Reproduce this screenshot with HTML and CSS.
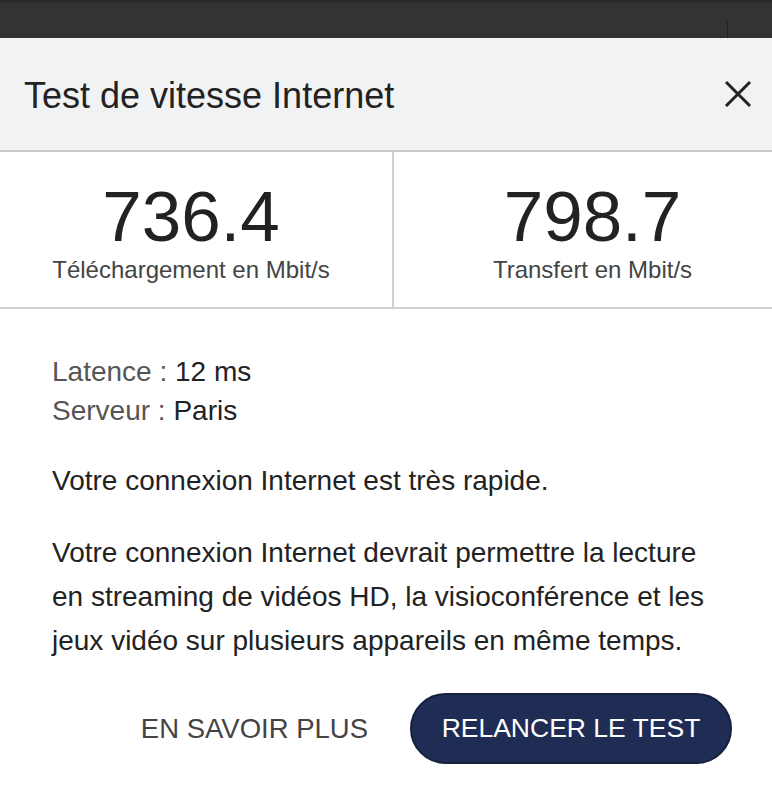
FILE: index.html
```html
<html>
  <head>
    <title>Test de vitesse Internet</title>
    <meta name="viewport" content="width=device-width, initial-scale=1.0">
    <link rel="stylesheet" href="styles.css">
  </head>
  <body>
    <div class="topbar"><span class="topbar-tick"></span></div>
    <div class="dialog">
      <div class="header">
        <h1>Test de vitesse Internet</h1>
        <button class="close-btn" aria-label="Fermer">
          <svg width="28" height="28" viewBox="0 0 28 28">
            <path d="M2 2 L26 26 M26 2 L2 26" stroke="#222" stroke-width="3" fill="none"/>
          </svg>
        </button>
      </div>
      <div class="stats">
        <div class="stat">
          <div class="stat-value">736.4</div>
          <div class="stat-label">Téléchargement en Mbit/s</div>
        </div>
        <div class="stat">
          <div class="stat-value">798.7</div>
          <div class="stat-label">Transfert en Mbit/s</div>
        </div>
      </div>
      <div class="details">
        <p class="info"><span class="info-key">Latence :</span> 12 ms</p>
        <p class="info"><span class="info-key">Serveur :</span> Paris</p>
        <p class="summary">Votre connexion Internet est très rapide.</p>
        <p class="text">Votre connexion Internet devrait permettre la lecture en streaming de vidéos HD, la visioconférence et les jeux vidéo sur plusieurs appareils en même temps.</p>
      </div>
      <div class="actions">
        <button class="link-btn">EN SAVOIR PLUS</button>
        <button class="main-btn">RELANCER LE TEST</button>
      </div>
    </div>
  </body>
</html>
```

FILE: styles.css
```css
*{
  margin: 0px;
  box-sizing: border-box;
}

body{
  background-color: white;
  font-family: "Liberation Sans", Arial, sans-serif;
  color: #222222;
}

.topbar{
  height: 38px;
  background-color: #333333;
  border-top: 3px solid #2a2a2a;
  position: relative;
}

.topbar-tick{
  position: absolute;
  right: 44px;
  top: 18px;
  width: 1px;
  height: 17px;
  background-color: #222222;
}

.header{
  display: flex;
  align-items: center;
  justify-content: space-between;
  height: 114px;
  padding: 0px 20px 0px 24px;
  background-color: #f0f2f4;
  border-bottom: 2px solid #c8c8c8;
}

.header h1{
  font-weight: normal;
  font-size: 36px;
  color: #222222;
  padding-top: 4px;
}

.close-btn{
  background: none;
  border: none;
  padding: 0px;
  width: 28px;
  height: 28px;
  cursor: pointer;
}

.stats{
  display: grid;
  grid-template-columns: 392px 1fr;
  height: 157px;
  border-bottom: 2px solid #d2d2d2;
}

.stat{
  display: flex;
  flex-direction: column;
  align-items: center;
  padding-top: 30px;
  padding-right: 10px;
}

.stat + .stat{
  border-left: 2px solid #d2d2d2;
  padding-left: 19px;
  padding-right: 0px;
}

.stat-value{
  font-size: 71px;
  line-height: 70px;
  color: #222222;
}

.stat-label{
  font-size: 24px;
  line-height: 24px;
  margin-top: 6px;
  color: #444444;
}

.details{
  padding: 43px 40px 0px 52px;
  font-size: 28px;
}

.info{
  line-height: 39px;
  color: #222222;
}

.info-key{
  color: #555555;
}

.summary{
  margin-top: 31px;
  line-height: 40px;
}

.text{
  margin-top: 30px;
  line-height: 44px;
}

.actions{
  display: flex;
  justify-content: flex-end;
  align-items: center;
  gap: 42px;
  padding: 30px 40px 0px 0px;
}

.link-btn{
  background: none;
  border: none;
  font-family: "Liberation Sans", Arial, sans-serif;
  font-size: 27.5px;
  color: #444444;
  padding: 0px;
  cursor: pointer;
}

.main-btn{
  height: 71px;
  width: 322px;
  padding: 0px;
  border-radius: 36px;
  background-color: #1f2d55;
  border: 2px solid #16203f;
  color: white;
  font-family: "Liberation Sans", Arial, sans-serif;
  font-size: 26.5px;
  cursor: pointer;
}
```
